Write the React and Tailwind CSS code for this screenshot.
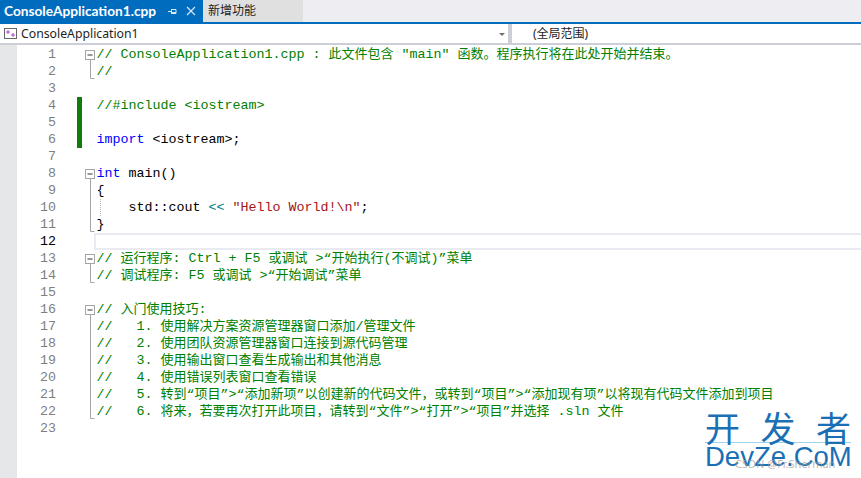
import React from 'react'

const MONO = 'font-["Liberation_Mono","Noto_Sans_CJK_SC",monospace]'
const UI = 'font-["Noto_Sans","Noto_Sans_CJK_SC",sans-serif]'

const G = 'text-[#008000]'
const K = 'text-[#0000ff]'
const S = 'text-[#a31515]'
const T = 'text-[#008080]'
const P = 'text-[#000000]'

// fold: start | mid | end, changed: green bar on the left
const LINES = [
  { fold: 'start', runs: [[G, '// ConsoleApplication1.cpp : 此文件包含 "main" 函数。程序执行将在此处开始并结束。']] },
  { fold: 'end', runs: [[G, '//']] },
  {},
  { changed: true, runs: [[G, '//#include <iostream>']] },
  { changed: true },
  { changed: true, runs: [[K, 'import'], [P, ' <iostream>;']] },
  {},
  { fold: 'start', runs: [[K, 'int'], [P, ' main()']] },
  { fold: 'mid', runs: [[P, '{']] },
  { fold: 'mid', guide: true, runs: [[P, '    std::cout '], [T, '<<'], [P, ' '], [S, '"Hello World!\\n"'], [P, ';']] },
  { fold: 'end', runs: [[P, '}']] },
  { current: true },
  { fold: 'start', runs: [[G, '// 运行程序: Ctrl + F5 或调试 >“开始执行(不调试)”菜单']] },
  { fold: 'end', runs: [[G, '// 调试程序: F5 或调试 >“开始调试”菜单']] },
  {},
  { fold: 'start', runs: [[G, '// 入门使用技巧:']] },
  { fold: 'mid', runs: [[G, '//   1. 使用解决方案资源管理器窗口添加/管理文件']] },
  { fold: 'mid', runs: [[G, '//   2. 使用团队资源管理器窗口连接到源代码管理']] },
  { fold: 'mid', runs: [[G, '//   3. 使用输出窗口查看生成输出和其他消息']] },
  { fold: 'mid', runs: [[G, '//   4. 使用错误列表窗口查看错误']] },
  { fold: 'mid', runs: [[G, '//   5. 转到“项目”>“添加新项”以创建新的代码文件\uff0c或转到“项目”>“添加现有项”以将现有代码文件添加到项目']] },
  { fold: 'end', runs: [[G, '//   6. 将来\uff0c若要再次打开此项目\uff0c请转到“文件”>“打开”>“项目”并选择 .sln 文件']] },
  {},
]

// CJK glyphs sit on a 13px pitch, latin on the 8px mono grid
function Run({ className, text }) {
  const parts = text.split(/([\u3000-\u303f\u4e00-\u9fff\uff00-\uffef]+)/)
  return (
    <span className={className}>
      {parts.map((p, i) => (i % 2 ? <span key={i} className="text-[13px]">{p}</span> : p))}
    </span>
  )
}

function FoldMark({ fold }) {
  if (!fold) return null
  return (
    <svg width="12" height="17" viewBox="0 0 12 17" className="block">
      {fold === 'start' && (
        <>
          <rect x="0.5" y="4.5" width="9" height="9" fill="#fff" stroke="#a5a5a5" />
          <path d="M2.5 9h5" stroke="#333" />
          <path d="M5.5 14v3" stroke="#a5a5a5" />
        </>
      )}
      {fold === 'mid' && <path d="M5.5 0v17" stroke="#a5a5a5" />}
      {fold === 'end' && <path d="M5.5 0v15.5h4" stroke="#a5a5a5" fill="none" />}
    </svg>
  )
}

function CodeLine({ n, line }) {
  return (
    <div className="flex h-[17px] items-center">
      <div className={`w-[39px] shrink-0 text-right ${line.current ? 'text-[#000000]' : 'text-[#7f7f7f]'}`}>{n}</div>
      <div className="ml-[21px] h-full w-[5px] shrink-0">
        {line.changed && <div className="h-[17px] w-[5px] bg-[#107c10]" />}
      </div>
      <div className="ml-[3px] h-full w-[9px] shrink-0">
        <FoldMark fold={line.fold} />
      </div>
      {line.current ? (
        <div className="-mr-[2px] h-[17px] flex-1 self-start border-2 border-[#eaeaf2]" />
      ) : (
        <div className="relative ml-[2.5px] flex-1 whitespace-pre">
          {line.guide && <div className="absolute left-[3px] top-0 h-full border-l border-dotted border-[#b8b8b8]" />}
          {line.runs?.map(([c, t], i) => <Run key={i} className={c} text={t} />)}
        </div>
      )}
    </div>
  )
}

export default function App() {
  return (
    <div className="relative h-[478px] w-[861px] overflow-hidden bg-white">
      {/* tab well */}
      <div className={`flex h-[22px] bg-[#eeeef2] ${UI}`}>
        <div className="flex w-[203px] items-center bg-[#006cbe] pl-[4px] text-white">
          <span className="w-[152px] whitespace-nowrap font-['Lato',sans-serif] text-[13.7px] font-bold leading-none">ConsoleApplication1.cpp</span>
          <svg width="9" height="9" viewBox="0 0 9 9" className="ml-[12px] shrink-0">
            <path d="M0 4.5h3M3.5 2v5M3.5 2.5h4.5v4H3.5M3.5 5.5h4.5" stroke="#d5e6f4" fill="none" />
          </svg>
          <svg width="10" height="10" viewBox="0 0 10 10" className="ml-[9px] shrink-0">
            <path d="M1 1l8 8M9 1l-8 8" stroke="#d5e6f4" strokeWidth="1.2" />
          </svg>
        </div>
        <div className="flex w-[100px] items-center bg-[#e0e0e0] pl-[5px] text-[12px] text-[#1e1e1e]">新增功能</div>
      </div>
      <div className="h-[2px] bg-[#006cbe]" />

      {/* navigation bar */}
      <div className={`flex h-[21px] border-b-2 border-[#ccced8] text-[12.25px] text-[#1e1e1e] ${UI}`}>
        <div className="flex w-[508px] items-center pl-[4px] pt-[1px]">
          <svg width="14" height="12" viewBox="0 0 14 12" className="shrink-0">
            <rect x="0.5" y="0.5" width="12" height="10" fill="#fff" stroke="#666" />
            <path d="M4 2v4M2 4h4" stroke="#b040d0" />
            <path d="M9 5v4M7 7h4" stroke="#b040d0" />
          </svg>
          <span className="ml-[3px] flex-1">ConsoleApplication1</span>
          <div className="mr-[3px] h-0 w-0 border-x-[3px] border-t-[3px] border-x-transparent border-t-[#707070]" />
        </div>
        <div className="w-[4px] bg-[#ccced8]" />
        <div className="flex flex-1 items-center pl-[21px] pt-[1px] text-[12px]">(全局范围)</div>
      </div>

      {/* editor */}
      <div className="flex">
        <div className="h-[433px] w-[17px] shrink-0 bg-[#e6e7e8]" />
        <div className={`flex-1 pt-[1px] text-[13.33px] leading-[17px] ${MONO}`}>
          {LINES.map((line, i) => <CodeLine key={i} n={i + 1} line={line} />)}
        </div>
      </div>

      {/* watermark */}
      <div className="absolute left-[705px] top-[410px] w-[146px] font-['Noto_Sans_CJK_SC',sans-serif] text-[#1a6fb5]">
        <div className="flex h-[33px] items-center justify-between border-b border-[#9fd4ee] text-[35px] font-normal leading-none">
          <span>开</span><span>发</span><span>者</span>
        </div>
        <div className="whitespace-nowrap font-['Liberation_Sans',sans-serif] text-[27.5px] leading-[27px]">DevZe.CoM</div>
      </div>
      <div className={`absolute left-[735px] top-[456px] text-[11px] text-[#9a9a9a]/70 ${UI}`}>CSDN @Fr.Sherman</div>
    </div>
  )
}
